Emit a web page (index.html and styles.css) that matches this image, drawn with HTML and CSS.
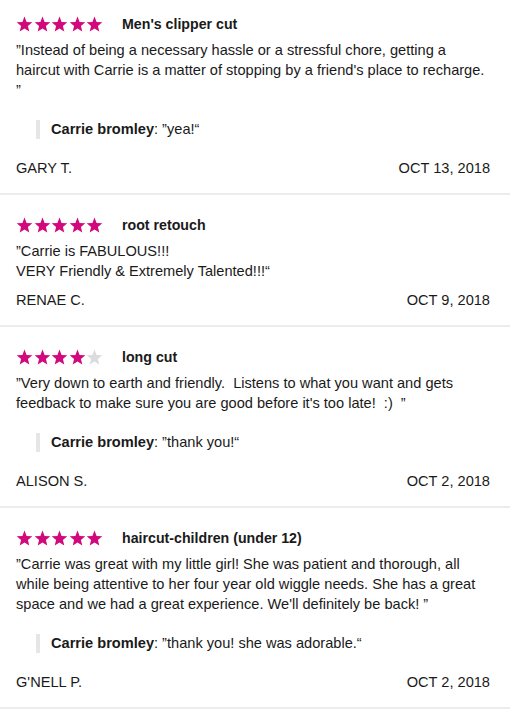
FILE: index.html
```html
<!DOCTYPE html>
<html>
<head>
<meta charset="utf-8">
<link rel="stylesheet" href="styles.css">
</head>
<body>
<svg width="0" height="0" class="defs">
  <defs>
    <path id="star" d="M8.5 0.6 L10.6 5.9 L16.3 6.3 L11.9 9.9 L13.3 15.5 L8.5 12.4 L3.7 15.5 L5.1 9.9 L0.7 6.3 L6.4 5.9 Z"/>
  </defs>
</svg>
<div class="reviews">

  <div class="review">
    <div class="head">
      <div class="stars">
        <svg class="star on" viewBox="0 0 17 16"><use href="#star"/></svg>
        <svg class="star on" viewBox="0 0 17 16"><use href="#star"/></svg>
        <svg class="star on" viewBox="0 0 17 16"><use href="#star"/></svg>
        <svg class="star on" viewBox="0 0 17 16"><use href="#star"/></svg>
        <svg class="star on" viewBox="0 0 17 16"><use href="#star"/></svg>
      </div>
      <div class="title">Men's clipper cut</div>
    </div>
    <p class="text">”Instead of being a necessary hassle or a stressful chore, getting a haircut with Carrie is a matter of stopping by a friend's place to recharge. ”</p>
    <div class="reply"><b>Carrie bromley</b>: ”yea!“</div>
    <div class="meta"><span>GARY T.</span><span>OCT 13, 2018</span></div>
  </div>

  <div class="review">
    <div class="head">
      <div class="stars">
        <svg class="star on" viewBox="0 0 17 16"><use href="#star"/></svg>
        <svg class="star on" viewBox="0 0 17 16"><use href="#star"/></svg>
        <svg class="star on" viewBox="0 0 17 16"><use href="#star"/></svg>
        <svg class="star on" viewBox="0 0 17 16"><use href="#star"/></svg>
        <svg class="star on" viewBox="0 0 17 16"><use href="#star"/></svg>
      </div>
      <div class="title">root retouch</div>
    </div>
    <p class="text">”Carrie is FABULOUS!!!<br>VERY Friendly &amp; Extremely Talented!!!“</p>
    <div class="meta"><span>RENAE C.</span><span>OCT 9, 2018</span></div>
  </div>

  <div class="review">
    <div class="head">
      <div class="stars">
        <svg class="star on" viewBox="0 0 17 16"><use href="#star"/></svg>
        <svg class="star on" viewBox="0 0 17 16"><use href="#star"/></svg>
        <svg class="star on" viewBox="0 0 17 16"><use href="#star"/></svg>
        <svg class="star on" viewBox="0 0 17 16"><use href="#star"/></svg>
        <svg class="star off" viewBox="0 0 17 16"><use href="#star"/></svg>
      </div>
      <div class="title">long cut</div>
    </div>
    <p class="text">”Very down to earth and friendly.&nbsp; Listens to what you want and gets feedback to make sure you are good before it's too late!&nbsp; :)&nbsp; ”</p>
    <div class="reply"><b>Carrie bromley</b>: ”thank you!“</div>
    <div class="meta"><span>ALISON S.</span><span>OCT 2, 2018</span></div>
  </div>

  <div class="review">
    <div class="head">
      <div class="stars">
        <svg class="star on" viewBox="0 0 17 16"><use href="#star"/></svg>
        <svg class="star on" viewBox="0 0 17 16"><use href="#star"/></svg>
        <svg class="star on" viewBox="0 0 17 16"><use href="#star"/></svg>
        <svg class="star on" viewBox="0 0 17 16"><use href="#star"/></svg>
        <svg class="star on" viewBox="0 0 17 16"><use href="#star"/></svg>
      </div>
      <div class="title">haircut-children (under 12)</div>
    </div>
    <p class="text">”Carrie was great with my little girl! She was patient and thorough, all while being attentive to her four year old wiggle needs. She has a great space and we had a great experience. We'll definitely be back! ”</p>
    <div class="reply"><b>Carrie bromley</b>: ”thank you! she was adorable.“</div>
    <div class="meta"><span>G'NELL P.</span><span>OCT 2, 2018</span></div>
  </div>

</div>
</body>
</html>
```
FILE: styles.css
```css
html, body {
  margin: 0;
  padding: 0;
  background: #fff;
}
body {
  font-family: "Liberation Sans", Arial, sans-serif;
  color: #1a1a1a;
  font-size: 14.6px;
}
.defs {
  position: absolute;
  width: 0;
  height: 0;
}
.reviews {
  width: 510px;
}
.review {
  padding: 20px 20px 0 16px;
  border-bottom: 2px solid #ececec;
}
.review:first-child {
  padding-top: 14px;
}
.head {
  display: flex;
  align-items: center;
  height: 20px;
}
.stars {
  display: flex;
  gap: 0.5px;
  width: 106px;
}
.star {
  width: 17px;
  height: 16px;
}
.star.on { fill: #d1097c; }
.star.off { fill: #dcdcdc; }
.title {
  font-weight: bold;
  font-size: 14.2px;
}
.text {
  margin: 6px 0 0;
  line-height: 20px;
}
.reply {
  margin: 20px 0 0 20px;
  padding-left: 11px;
  border-left: 4px solid #e6e6e6;
  line-height: 19px;
}
.meta {
  display: flex;
  justify-content: space-between;
  margin: 19px 0 0;
  line-height: 20px;
  padding-bottom: 15px;
}
.text + .meta {
  margin-top: 9px;
}
```
